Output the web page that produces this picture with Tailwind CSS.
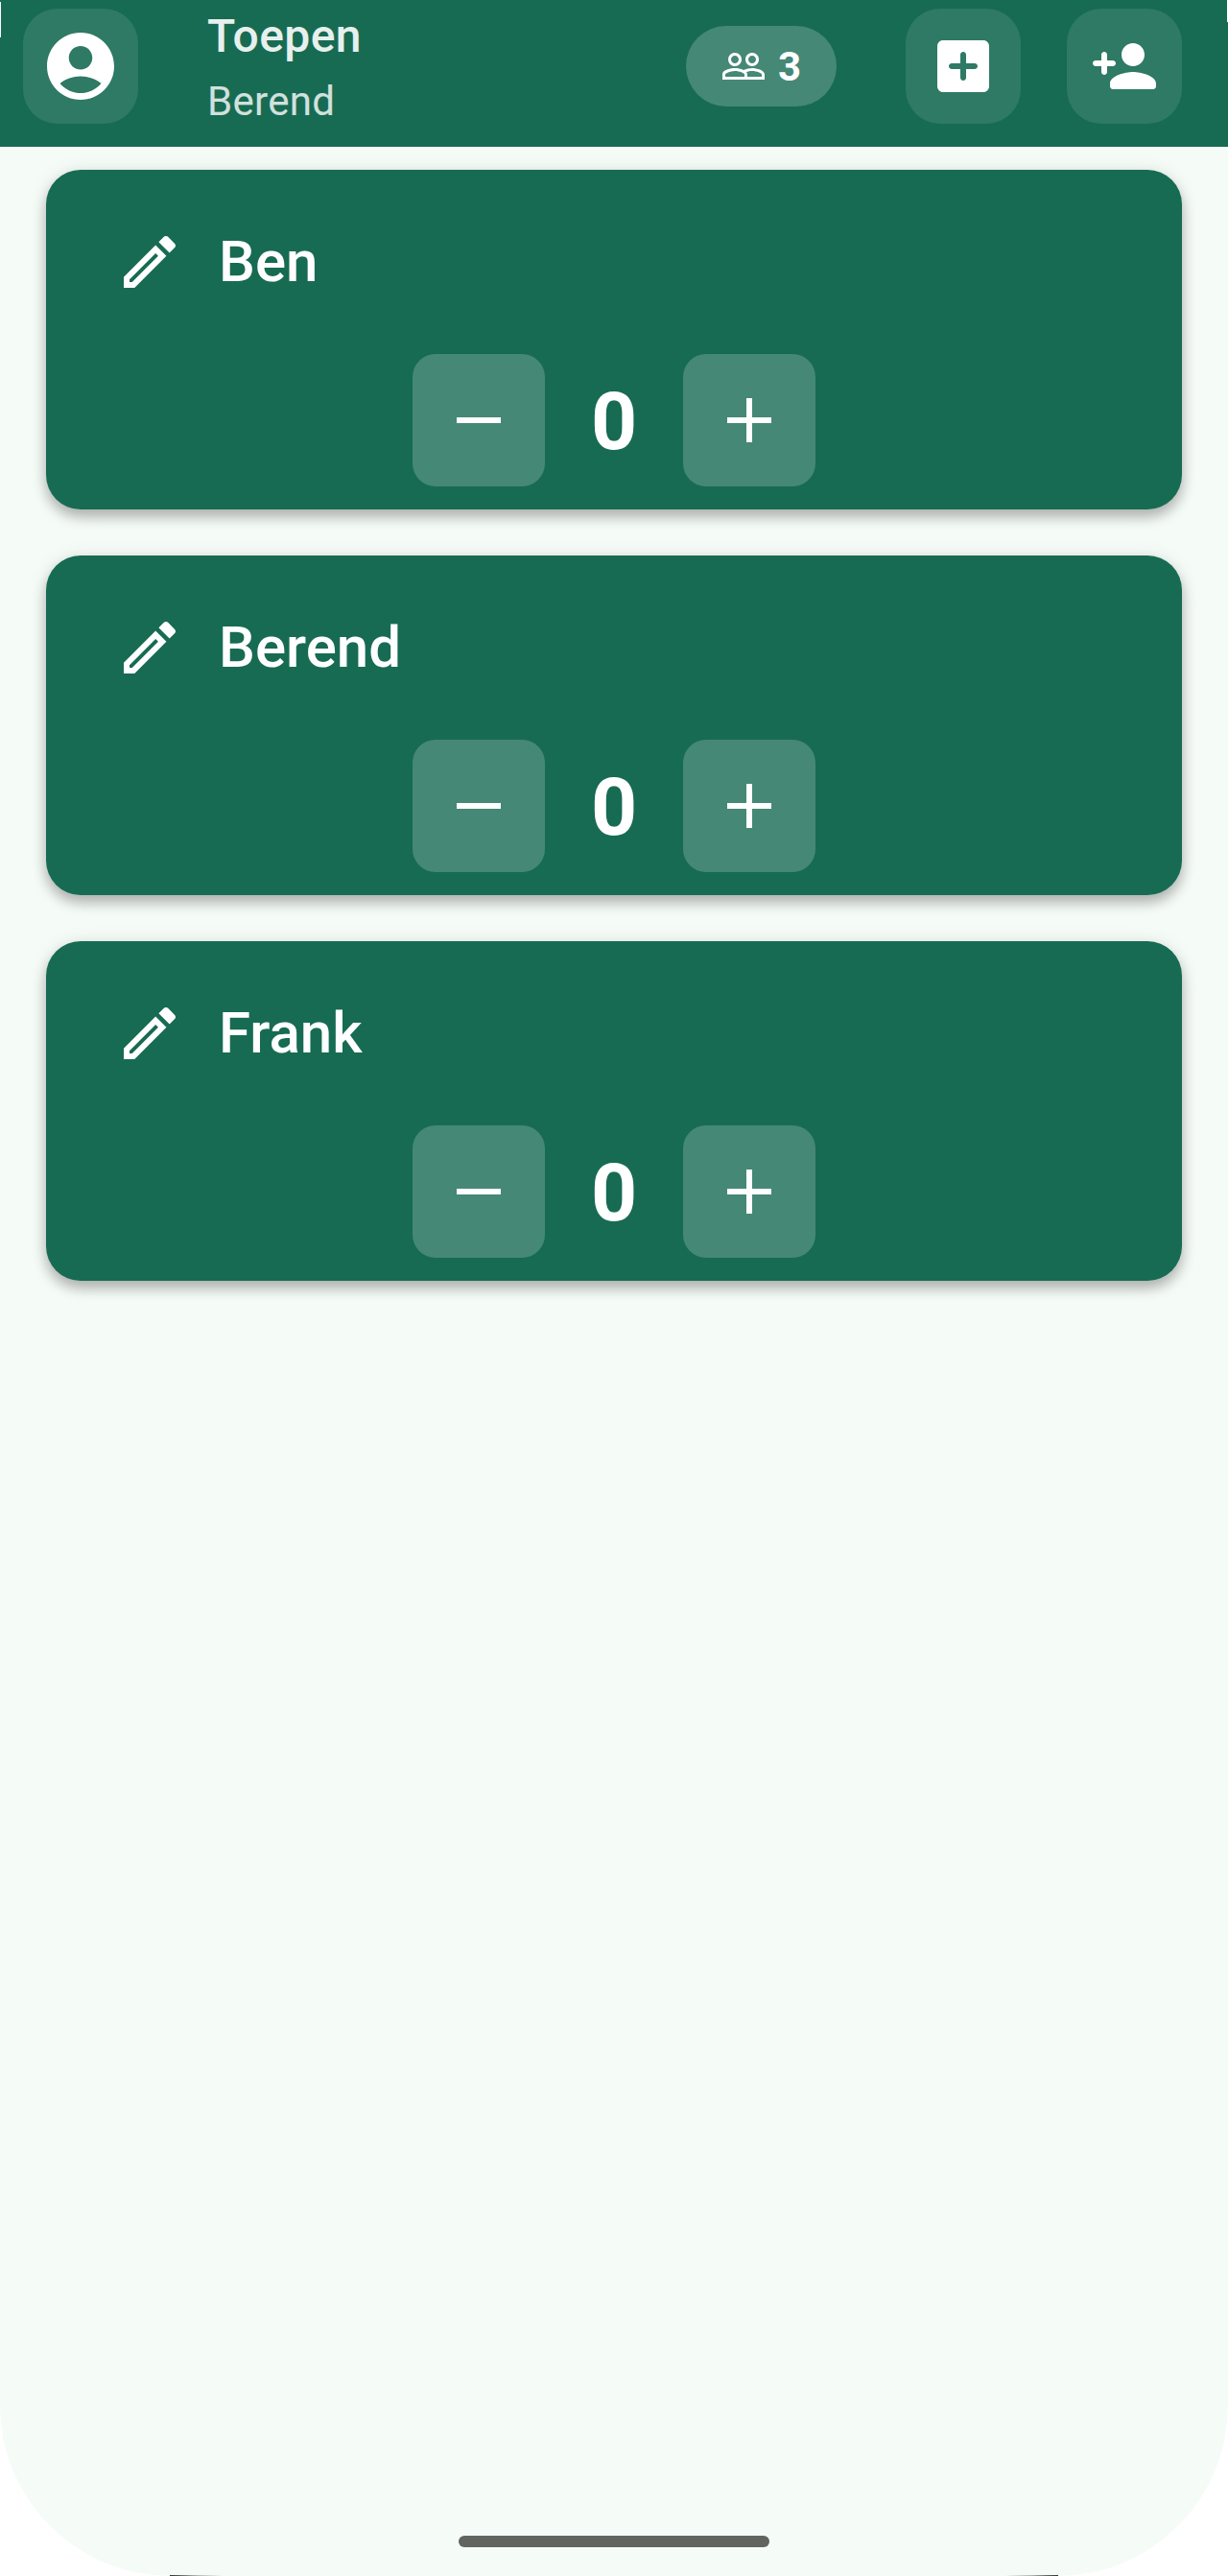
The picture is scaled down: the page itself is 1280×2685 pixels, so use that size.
<!DOCTYPE html>
<html lang="nl">
<head>
<meta charset="utf-8">
<title>Toepen</title>
<script src="https://cdn.jsdelivr.net/npm/@tailwindcss/browser@4"></script>
</head>
<body class="bg-white font-[Roboto,sans-serif] text-white">
<svg class="hidden">
  <symbol id="edit" viewBox="0 0 24 24"><path d="M14.06 9.02l.92.92L5.92 19H5v-.92l9.06-9.06M17.66 3c-.25 0-.51.1-.7.29l-1.83 1.83 3.75 3.75 1.83-1.83c.39-.39.39-1.02 0-1.41l-2.34-2.34c-.2-.2-.45-.29-.71-.29zm-3.6 3.19L3 17.25V21h3.75L17.81 9.94l-3.75-3.75z"/></symbol>
  <symbol id="minus" viewBox="0 0 46 46"><path d="M0 20h46v6H0z"/></symbol>
  <symbol id="plus" viewBox="0 0 46 46"><path d="M0 20h20V0h6v20h20v6H26v20h-6V26H0z"/></symbol>
</svg>
<div class="relative flex h-[2685px] w-[1280px] flex-col overflow-hidden rounded-b-[178px] bg-[#f5fbf7]">
  <header class="flex h-[153px] shrink-0 items-start bg-[#176b53] pt-[9px] pr-12 pl-6">
    <button class="flex size-[120px] items-center justify-center rounded-[36px] bg-white/10">
      <svg class="size-[84px]" viewBox="0 0 24 24" fill="currentColor"><path d="M12 2C6.48 2 2 6.48 2 12s4.48 10 10 10 10-4.48 10-10S17.52 2 12 2zm0 4c1.93 0 3.5 1.57 3.5 3.5S13.93 13 12 13s-3.5-1.57-3.5-3.5S10.07 6 12 6zm0 14c-2.03 0-4.43-.82-6.14-2.88C7.55 15.8 9.68 15 12 15s4.45.8 6.14 2.12C16.43 19.18 14.03 20 12 20z"/></svg>
    </button>
    <div class="ml-[72px] flex-1">
      <h1 class="mt-[-1px] text-[48px] leading-[60px] font-medium tracking-[0.45px] text-white/90">Toepen</h1>
      <p class="mt-2 text-[42px] leading-[60px] tracking-[0.3px] text-white/80">Berend</p>
    </div>
    <div class="mt-[18px] flex h-[84px] w-[157px] items-center rounded-full bg-white/20 pl-9">
      <svg class="size-12" viewBox="0 0 24 24" fill="currentColor"><path d="M16.5 13c-1.2 0-3.07.34-4.5 1-1.43-.67-3.3-1-4.5-1C5.33 13 1 14.08 1 16.25V19h22v-2.75c0-2.17-4.33-3.25-6.5-3.25zm-4 4.5h-10v-1.25c0-.54 2.56-1.75 5-1.75s5 1.21 5 1.75v1.25zm9 0H14v-1.25c0-.46-.2-.86-.52-1.22.88-.3 1.96-.53 3.02-.53 2.44 0 5 1.21 5 1.75v1.25zM7.5 12c1.93 0 3.5-1.57 3.5-3.5S9.43 5 7.5 5 4 6.57 4 8.5 5.57 12 7.5 12zm0-5.5c1.1 0 2 .9 2 2s-.9 2-2 2-2-.9-2-2 .9-2 2-2zm9 5.5c1.93 0 3.5-1.57 3.5-3.5S18.43 5 16.5 5 13 6.57 13 8.5s1.57 3.5 3.5 3.5zm0-5.5c1.1 0 2 .9 2 2s-.9 2-2 2-2-.9-2-2 .9-2 2-2z"/></svg>
      <span class="mt-0.5 ml-3 text-[42px] leading-none font-bold">3</span>
    </div>
    <button class="ml-[72px] flex size-[120px] items-center justify-center rounded-[36px] bg-white/10">
      <svg class="size-[72px]" viewBox="0 0 24 24" fill="currentColor"><path d="M19 3H5c-1.11 0-2 .9-2 2v14c0 1.1.89 2 2 2h14c1.1 0 2-.9 2-2V5c0-1.1-.9-2-2-2zm-3 10h-3v3c0 .55-.45 1-1 1s-1-.45-1-1v-3H8c-.55 0-1-.45-1-1s.45-1 1-1h3V8c0-.55.45-1 1-1s1 .45 1 1v3h3c.55 0 1 .45 1 1s-.45 1-1 1z"/></svg>
    </button>
    <button class="ml-12 flex size-[120px] items-center justify-center rounded-[36px] bg-white/10">
      <svg class="size-[72px]" viewBox="0 0 24 24" fill="currentColor"><path d="M15 12c2.21 0 4-1.79 4-4s-1.79-4-4-4-4 1.79-4 4 1.79 4 4 4zm-9-2V8c0-.55-.45-1-1-1s-1 .45-1 1v2H2c-.55 0-1 .45-1 1s.45 1 1 1h2v2c0 .55.45 1 1 1s1-.45 1-1v-2h2c.55 0 1-.45 1-1s-.45-1-1-1H6zm9 4c-2.67 0-8 1.34-8 4v1c0 .55.45 1 1 1h14c.55 0 1-.45 1-1v-1c0-2.66-5.33-4-8-4z"/></svg>
    </button>
  </header>

  <main class="flex flex-1 flex-col gap-12 px-12 pt-6">
    <section class="h-[354px] rounded-[36px] bg-[#176b53] pt-[60px] shadow-[0_8px_14px_rgba(0,0,0,0.27),0_0_20px_rgba(0,0,0,0.07)]">
      <div class="flex h-[72px] items-center gap-9 pl-[72px]">
        <svg class="size-[72px]" fill="currentColor"><use href="#edit"/></svg>
        <h2 class="text-[60px] leading-[72px] font-medium">Ben</h2>
      </div>
      <div class="mt-[60px] flex items-center justify-center">
        <button class="flex size-[138px] items-center justify-center rounded-3xl bg-white/20"><svg class="size-[46px]" fill="currentColor"><use href="#minus"/></svg></button>
        <span class="w-36 pt-1 text-center text-[84px] leading-none font-bold">0</span>
        <button class="flex size-[138px] items-center justify-center rounded-3xl bg-white/20"><svg class="size-[46px]" fill="currentColor"><use href="#plus"/></svg></button>
      </div>
    </section>
    <section class="h-[354px] rounded-[36px] bg-[#176b53] pt-[60px] shadow-[0_8px_14px_rgba(0,0,0,0.27),0_0_20px_rgba(0,0,0,0.07)]">
      <div class="flex h-[72px] items-center gap-9 pl-[72px]">
        <svg class="size-[72px]" fill="currentColor"><use href="#edit"/></svg>
        <h2 class="text-[60px] leading-[72px] font-medium">Berend</h2>
      </div>
      <div class="mt-[60px] flex items-center justify-center">
        <button class="flex size-[138px] items-center justify-center rounded-3xl bg-white/20"><svg class="size-[46px]" fill="currentColor"><use href="#minus"/></svg></button>
        <span class="w-36 pt-1 text-center text-[84px] leading-none font-bold">0</span>
        <button class="flex size-[138px] items-center justify-center rounded-3xl bg-white/20"><svg class="size-[46px]" fill="currentColor"><use href="#plus"/></svg></button>
      </div>
    </section>
    <section class="h-[354px] rounded-[36px] bg-[#176b53] pt-[60px] shadow-[0_8px_14px_rgba(0,0,0,0.27),0_0_20px_rgba(0,0,0,0.07)]">
      <div class="flex h-[72px] items-center gap-9 pl-[72px]">
        <svg class="size-[72px]" fill="currentColor"><use href="#edit"/></svg>
        <h2 class="text-[60px] leading-[72px] font-medium">Frank</h2>
      </div>
      <div class="mt-[60px] flex items-center justify-center">
        <button class="flex size-[138px] items-center justify-center rounded-3xl bg-white/20"><svg class="size-[46px]" fill="currentColor"><use href="#minus"/></svg></button>
        <span class="w-36 pt-1 text-center text-[84px] leading-none font-bold">0</span>
        <button class="flex size-[138px] items-center justify-center rounded-3xl bg-white/20"><svg class="size-[46px]" fill="currentColor"><use href="#plus"/></svg></button>
      </div>
    </section>
  </main>

  <!-- Gesture navigation handle -->
  <div class="mb-[30px] h-3 w-[324px] shrink-0 self-center rounded-full bg-[#626460]"></div>

  <!-- Screen edge slivers -->
  <div class="absolute top-0.5 left-0 h-[37px] w-px bg-white"></div>
  <div class="absolute top-0 right-0 h-[23px] w-px bg-white"></div>
  <div class="absolute bottom-0 left-[177px] h-px w-[55px] bg-linear-to-r from-[#333] via-[#b0b5b2] to-[#f5fbf7]"></div>
  <div class="absolute right-[177px] bottom-0 h-px w-[55px] bg-linear-to-l from-[#333] via-[#b0b5b2] to-[#f5fbf7]"></div>
</div>
</body>
</html>
